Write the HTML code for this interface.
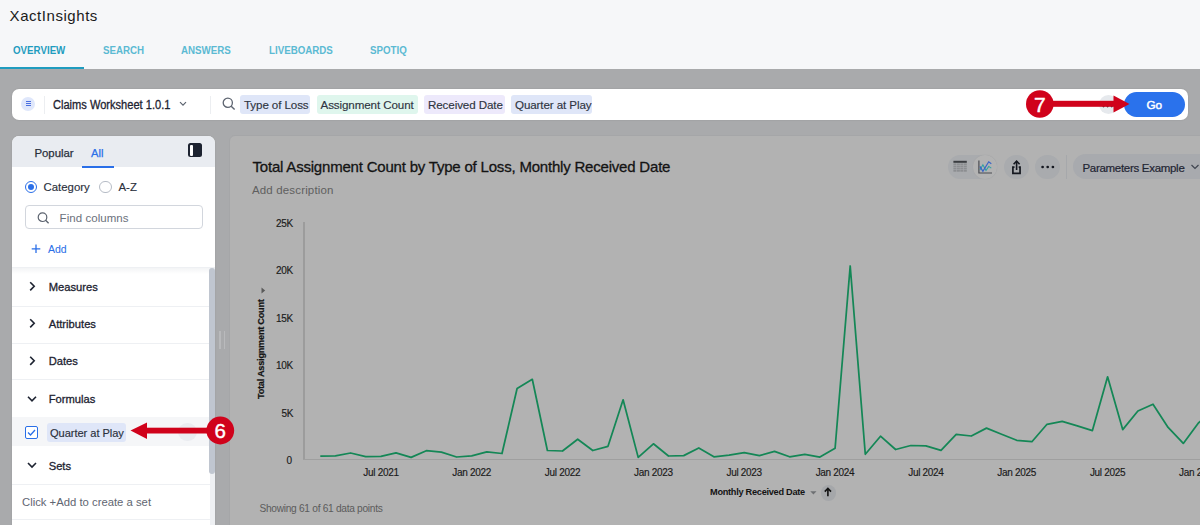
<!DOCTYPE html>
<html><head><meta charset="utf-8">
<style>
*{box-sizing:border-box;margin:0;padding:0}
html,body{width:1200px;height:525px;overflow:hidden}
body{position:relative;background:#a9aaac;font-family:"Liberation Sans",sans-serif;color:#1d2331}
.a{position:absolute;white-space:nowrap;line-height:1}
.abs{position:absolute}
#hdr{position:absolute;left:0;top:0;width:1200px;height:69px;background:#f6f7f9}
.tab{position:absolute;top:45px;font-size:11.4px;font-weight:bold;color:#5bbad3;line-height:1;transform:scaleX(0.855);transform-origin:0 0;white-space:nowrap}
#search{position:absolute;left:12px;top:88.5px;width:1176px;height:31.5px;background:#fff;border-radius:7px;box-shadow:0 0 2px rgba(0,0,0,0.12)}
.chip{position:absolute;white-space:nowrap;top:6.5px;height:18.5px;border-radius:3px;font-size:11.6px;color:#2f3542;line-height:20px;padding-left:4px;letter-spacing:-0.1px;-webkit-text-stroke:0.15px #2f3542}
#panel{position:absolute;left:12px;top:135.5px;width:203px;height:400px;background:#fff;border-radius:7px 7px 0 0;overflow:hidden;box-shadow:0 0 1.5px rgba(0,0,0,0.15)}
#card{position:absolute;left:229.2px;top:134.5px;width:1000px;height:400px;background:#b2b2b2;border-radius:6px;border:1px solid #a5a6a8}
.row{position:absolute;left:0;width:203px;border-top:1px solid #eef0f3}
.rt{position:absolute;left:36.7px;font-size:11.2px;color:#1d2331;line-height:1;-webkit-text-stroke:0.3px #1d2331;white-space:nowrap}
.ax{position:absolute;font-size:10px;color:#1a1a1a;line-height:1;white-space:nowrap;letter-spacing:-0.25px;-webkit-text-stroke:0.15px #1a1a1a}
.xl{position:absolute;top:468px;font-size:10px;color:#1a1a1a;line-height:1;white-space:nowrap;letter-spacing:-0.3px;transform:translateX(-50%);-webkit-text-stroke:0.15px #1a1a1a}
</style></head>
<body>
<div id="hdr">
  <div class="a" style="left:9.6px;top:8.2px;font-size:15px;letter-spacing:0.55px;color:#1b1b1b">XactInsights</div>
  <div class="tab" style="left:12.5px;color:#1f9cbf">OVERVIEW</div>
  <div class="tab" style="left:102.5px">SEARCH</div>
  <div class="tab" style="left:181px">ANSWERS</div>
  <div class="tab" style="left:269px">LIVEBOARDS</div>
  <div class="tab" style="left:370px">SPOTIQ</div>
  <div class="abs" style="left:0;top:67px;width:84px;height:2px;background:#1f9cbf"></div>
</div>

<div id="search">
  <div class="abs" style="left:9px;top:8px;width:14px;height:14px;border-radius:50%;background:#dfe7fb"></div>
  <div class="abs" style="left:13.6px;top:12.6px;width:5px;height:1px;background:#4b6fe0"></div>
  <div class="abs" style="left:13.6px;top:14.7px;width:5px;height:1px;background:#4b6fe0"></div>
  <div class="abs" style="left:13.6px;top:16.8px;width:5px;height:1px;background:#4b6fe0"></div>
  <div class="abs" style="left:32px;top:7px;width:1px;height:18px;background:#eceef1"></div>
  <div class="a" style="left:41px;top:10px;font-size:12px;color:#1d2331;-webkit-text-stroke:0.3px #1d2331;transform:scaleX(0.923);transform-origin:0 0">Claims Worksheet 1.0.1</div>
  <svg class="abs" style="left:167px;top:12.5px" width="8" height="6" viewBox="0 0 8 6"><path d="M1 1.2 L4 4.2 L7 1.2" fill="none" stroke="#5d6470" stroke-width="1.2"/></svg>
  <div class="abs" style="left:198px;top:7px;width:1px;height:18px;background:#eceef1"></div>
  <svg class="abs" style="left:210.3px;top:8.2px" width="14" height="14" viewBox="0 0 14 14"><circle cx="5.8" cy="5.8" r="4.6" fill="none" stroke="#5d6470" stroke-width="1.3"/><path d="M9.2 9.2 L12.6 12.6" stroke="#5d6470" stroke-width="1.4"/></svg>
  <div class="chip" style="left:228px;width:70px;background:#dfe6f8">Type of Loss</div>
  <div class="chip" style="left:304.5px;width:101px;background:#dff6ed">Assignment Count</div>
  <div class="chip" style="left:412px;width:80.5px;background:#ede9fb">Received Date</div>
  <div class="chip" style="left:499px;width:80.5px;background:#dfe6f8">Quarter at Play</div>
  <div class="abs" style="left:1086.5px;top:6.5px;width:19px;height:19px;border-radius:50%;background:#e6e9ed"></div><svg class="abs" style="left:1088px;top:14px" width="16" height="6"><circle cx="3.5" cy="3.3" r="1.1" fill="#2b2f38"/><circle cx="7.6" cy="3.3" r="1.1" fill="#2b2f38"/><circle cx="11.7" cy="3.3" r="1.1" fill="#2b2f38"/></svg>
  <div class="abs" style="left:1111.5px;top:3.5px;width:61.5px;height:25px;border-radius:13px;background:#2a72ec;color:#fff;font-size:11.8px;line-height:27px;text-align:center;-webkit-text-stroke:0.45px #fff">Go</div>
</div>

<!-- arrow 7 -->
<svg class="abs" style="left:0;top:0" width="1200" height="525">
  <rect x="1050" y="100.8" width="64" height="6" fill="#d0021b"/>
  <path d="M1113.5 95.5 L1129.5 104 L1113.5 112.5 Z" fill="#d0021b"/>
  <circle cx="1039.8" cy="104" r="13.8" fill="#d0021b"/>
  <text x="1039.9" y="111.7" font-family="Liberation Sans" font-size="21" fill="#fff" stroke="#fff" stroke-width="0.45" text-anchor="middle">7</text>
</svg>

<div id="panel">
  <div class="abs" style="left:0;top:0;width:203px;height:31px;background:#e9ecf1"></div>
  <div class="a" style="left:22.4px;top:12.5px;font-size:11.4px;color:#2a303c;-webkit-text-stroke:0.25px #2a303c">Popular</div>
  <div class="a" style="left:79px;top:12.5px;font-size:11.2px;color:#2a6fe8;-webkit-text-stroke:0.25px #2a6fe8">All</div>
  <div class="abs" style="left:69.7px;top:30px;width:32px;height:2px;background:#2a6fe8"></div>
  <div class="abs" style="left:176px;top:7.8px;width:14.4px;height:14px;border-radius:2.5px;background:#1d2331"></div>
  <div class="abs" style="left:177.8px;top:9.4px;width:3.6px;height:11px;border-radius:1px;background:#fff"></div>
  <!-- radios -->
  <div class="abs" style="left:12.7px;top:45.2px;width:12.6px;height:12.6px;border-radius:50%;border:1.3px solid #2a6fe8"></div>
  <div class="abs" style="left:15.7px;top:48.2px;width:6.6px;height:6.6px;border-radius:50%;background:#2a6fe8"></div>
  <div class="a" style="left:31.5px;top:46.3px;font-size:11.4px;color:#2a303c;-webkit-text-stroke:0.15px #2a303c">Category</div>
  <div class="abs" style="left:87.4px;top:45.2px;width:12.6px;height:12.6px;border-radius:50%;border:1px solid #b6bcc6"></div>
  <div class="a" style="left:106.5px;top:46.3px;font-size:11.4px;color:#2a303c;-webkit-text-stroke:0.15px #2a303c">A-Z</div>
  <!-- find -->
  <div class="abs" style="left:13.2px;top:69px;width:177.7px;height:24.3px;border-radius:4px;border:1px solid #d2d6dd"></div>
  <svg class="abs" style="left:25px;top:76px" width="13" height="12" viewBox="0 0 13 12"><circle cx="5.5" cy="5.2" r="4.3" fill="none" stroke="#5d6470" stroke-width="1.2"/><path d="M8.6 8.3 L11.6 11.3" stroke="#5d6470" stroke-width="1.3"/></svg>
  <div class="a" style="left:47.6px;top:77.5px;font-size:11.5px;letter-spacing:0.05px;color:#6b717c">Find columns</div>
  <svg class="abs" style="left:19px;top:108.5px" width="10" height="10" viewBox="0 0 10 10"><path d="M5 0.5 V9 M0.7 4.8 H9.3" stroke="#2a6fe8" stroke-width="1.3"/></svg>
  <div class="a" style="left:36px;top:108.5px;font-size:10.5px;color:#2a6fe8;-webkit-text-stroke:0.05px #2a6fe8">Add</div>
  <div class="abs" style="left:0;top:131.2px;width:203px;height:1px;background:#eef0f3"></div>
  <div class="abs" style="left:0;top:132.2px;width:203px;height:6px;background:linear-gradient(#f3f4f6,#fff)"></div>
  <!-- rows -->
  <div class="row" style="top:170.2px"></div>
  <div class="row" style="top:207.2px"></div>
  <div class="row" style="top:243.8px"></div>
  <div class="abs" style="left:0;top:281.9px;width:203px;height:29px;background:#f5f6f8"></div>
  <div class="row" style="top:348px"></div>
  <div class="row" style="top:383.8px"></div>
  <svg class="abs" style="left:0;top:0" width="203" height="400">
    <g fill="none" stroke="#1d2331" stroke-width="1.6">
      <path d="M18.2 146.2 L22.2 150.3 L18.2 154.4"/>
      <path d="M18.2 183.2 L22.2 187.3 L18.2 191.4"/>
      <path d="M18.2 220.7 L22.2 224.8 L18.2 228.9"/>
      <path d="M16 260.8 L20 264.8 L24 260.8"/>
      <path d="M16 327 L20 331 L24 327"/>
    </g>
  </svg>
  <div class="rt" style="top:146px">Measures</div>
  <div class="rt" style="top:183px">Attributes</div>
  <div class="rt" style="top:220.5px">Dates</div>
  <div class="rt" style="top:258px">Formulas</div>
  <div class="rt" style="top:325.5px">Sets</div>
  <div class="abs" style="left:13px;top:290.5px;width:12.6px;height:12.6px;border-radius:2px;border:1.2px solid #2a6fe8;background:#fff"></div>
  <svg class="abs" style="left:13px;top:290.5px" width="13" height="13" viewBox="0 0 13 13"><path d="M3 6.5 L5.5 9 L10 4" fill="none" stroke="#2a6fe8" stroke-width="1.3"/></svg>
  <div class="abs" style="left:35px;top:287.5px;width:78.6px;height:18.6px;border-radius:3px;background:#dfe6f8"></div>
  <div class="a" style="left:38px;top:292.5px;font-size:11.1px;color:#2a303c;letter-spacing:-0.05px;-webkit-text-stroke:0.15px #2a303c">Quarter at Play</div>
  <div class="abs" style="left:166.25px;top:287.45px;width:18.5px;height:18.5px;border-radius:50%;background:#eaecf0"></div>
  <div class="a" style="left:10px;top:361.5px;font-size:11.3px;color:#5f6672">Click +Add to create a set</div>
  <!-- scrollbar -->
  <div class="abs" style="left:197.5px;top:132px;width:5.5px;height:268px;background:#eef0f3"></div>
  <div class="abs" style="left:197.3px;top:132.1px;width:5.7px;height:206px;border-radius:3px;background:#c0c6d0"></div>
</div>

<!-- resize handle -->
<div class="abs" style="left:219.2px;top:330.5px;width:1.6px;height:18px;background:#b9babc"></div>
<div class="abs" style="left:223.8px;top:330.5px;width:1.6px;height:18px;background:#b9babc"></div>

<div id="card"></div>

<div class="a" style="left:252.5px;top:159px;font-size:15px;letter-spacing:-0.2px;color:#141414;-webkit-text-stroke:0.3px #141414">Total Assignment Count by Type of Loss, Monthly Received Date</div>
<div class="a" style="left:252px;top:184.7px;font-size:11.5px;color:#5f5f5f;letter-spacing:0.15px">Add description</div>

<!-- toolbar -->
<div class="abs" style="left:948px;top:154.5px;width:49px;height:24.5px;border-radius:12.3px;background:#a9abae"></div>
<div class="abs" style="left:973px;top:154.5px;width:24px;height:24.5px;border-radius:50%;background:#b3b3b3;box-shadow:0 0 1px #9b9da0"></div>
<svg class="abs" style="left:953px;top:160px" width="14" height="14" viewBox="0 0 14 14">
  <rect x="0.4" y="0.8" width="13.4" height="2" fill="#3a3c40"/>
  <g fill="#8c8e91"><rect x="0.4" y="3.4" width="3" height="1.7"/><rect x="3.9" y="3.4" width="3" height="1.7"/><rect x="7.3" y="3.4" width="3" height="1.7"/><rect x="10.8" y="3.4" width="3" height="1.7"/>
  <rect x="0.4" y="5.6" width="3" height="1.7"/><rect x="3.9" y="5.6" width="3" height="1.7"/><rect x="7.3" y="5.6" width="3" height="1.7"/><rect x="10.8" y="5.6" width="3" height="1.7"/>
  <rect x="0.4" y="7.8" width="3" height="1.7"/><rect x="3.9" y="7.8" width="3" height="1.7"/><rect x="7.3" y="7.8" width="3" height="1.7"/><rect x="10.8" y="7.8" width="3" height="1.7"/>
  <rect x="0.4" y="10" width="3" height="1.7"/><rect x="3.9" y="10" width="3" height="1.7"/><rect x="7.3" y="10" width="3" height="1.7"/><rect x="10.8" y="10" width="3" height="1.7"/></g>
</svg>
<svg class="abs" style="left:977.5px;top:160px" width="15" height="14" viewBox="0 0 15 14">
  <path d="M0.9 0.6 V13 H14" fill="none" stroke="#4a4c52" stroke-width="1.2"/>
  <path d="M1.9 10 L4.9 4.8 L8 10.5 L10.7 6.4 L13.3 8.1" fill="none" stroke="#2fa0a4" stroke-width="1.1"/>
  <path d="M1.9 6.4 L4.9 11.3 L10.7 1.8 L13.3 3.7" fill="none" stroke="#3a63c8" stroke-width="1.2"/>
</svg>
<div class="abs" style="left:1004.3px;top:154.5px;width:24.6px;height:24.5px;border-radius:50%;background:#a9abae"></div>
<svg class="abs" style="left:1011px;top:159.5px" width="11" height="15" viewBox="0 0 11 15">
  <path d="M5.6 1.2 V10" fill="none" stroke="#151820" stroke-width="1.6"/>
  <path d="M2.6 4.3 L5.6 1.2 L8.6 4.3" fill="none" stroke="#151820" stroke-width="1.6"/>
  <path d="M3.5 7.05 H1.9 V13.35 H9.05 V7.05 H7.7" fill="none" stroke="#151820" stroke-width="1.7"/>
</svg>
<div class="abs" style="left:1035.4px;top:154.5px;width:24.4px;height:24.5px;border-radius:50%;background:#a9abae"></div>
<svg class="abs" style="left:1040px;top:165px" width="16" height="4" viewBox="0 0 16 4"><circle cx="2.6" cy="2" r="1.35" fill="#151820"/><circle cx="7.7" cy="2" r="1.35" fill="#151820"/><circle cx="12.9" cy="2" r="1.35" fill="#151820"/></svg>
<div class="abs" style="left:1066px;top:154.8px;width:1px;height:24px;background:#a6a8ab"></div>
<div class="abs" style="left:1073.4px;top:154.3px;width:160px;height:25.1px;border-radius:12.5px;background:#a8aaae"></div>
<div class="a" style="left:1082.5px;top:162.7px;font-size:11.5px;color:#1f2533;letter-spacing:-0.3px;-webkit-text-stroke:0.2px #1f2533">Parameters Example</div>
<svg class="abs" style="left:1190px;top:163px" width="10" height="8" viewBox="0 0 10 8"><path d="M1.5 2 L5 5.5 L8.5 2" fill="none" stroke="#3f4550" stroke-width="1.2"/></svg>

<!-- axes -->
<div class="ax" style="left:276px;top:218.5px">25K</div>
<div class="ax" style="left:276px;top:266px">20K</div>
<div class="ax" style="left:276px;top:313.5px">15K</div>
<div class="ax" style="left:276px;top:361px">10K</div>
<div class="ax" style="left:281.4px;top:408.5px">5K</div>
<div class="ax" style="left:286.6px;top:456px">0</div>
<div class="abs" style="left:303px;top:222px;width:1.6px;height:238px;background:#9c9c9c"></div>
<div class="abs" style="left:303px;top:458.6px;width:900px;height:1.8px;background:#9f9f9f"></div>
<div class="a" style="left:256.8px;top:398.5px;font-size:9.2px;font-weight:bold;color:#141414;transform:rotate(-90deg);transform-origin:0 0;letter-spacing:-0.25px;-webkit-text-stroke:0.2px #141414">Total Assignment Count</div>
<svg class="abs" style="left:260.5px;top:287px" width="5" height="7" viewBox="0 0 5 7"><path d="M0.5 0.5 L4.2 3.5 L0.5 6.5 Z" fill="#5a5a5a"/></svg>

<div class="xl" style="left:381px">Jul 2021</div>
<div class="xl" style="left:471.7px">Jan 2022</div>
<div class="xl" style="left:562.5px">Jul 2022</div>
<div class="xl" style="left:653.4px">Jan 2023</div>
<div class="xl" style="left:744.2px">Jul 2023</div>
<div class="xl" style="left:835px">Jan 2024</div>
<div class="xl" style="left:925.9px">Jul 2024</div>
<div class="xl" style="left:1016.7px">Jan 2025</div>
<div class="xl" style="left:1107.6px">Jul 2025</div>
<div class="xl" style="left:1198.4px">Jan 2026</div>

<svg class="abs" style="left:0;top:0" width="1200" height="525">
  <polyline points="320.3,456.2 335.4,455.8 350.6,453 365.7,456.6 380.9,456.4 396.0,452.8 411.1,457.4 426.3,450.7 441.4,452.2 456.6,457 471.7,455.9 486.8,451.8 502.0,453.5 517.1,388.5 532.3,379.3 547.4,450.5 562.5,451 577.7,439.2 592.8,450.5 608.0,446.3 623.1,399.8 638.2,457.4 653.4,443.8 668.5,456 683.7,455.6 698.8,448 713.9,456.8 729.1,455.1 744.2,452.6 759.4,455.6 774.5,451.4 789.6,456.8 804.8,454.3 819.9,457.1 835.1,448.2 850.2,266 865.3,454.3 880.5,436.2 895.6,449.5 910.8,445.5 925.9,445.8 941.0,450.3 956.2,434.4 971.3,436 986.5,428.1 1001.6,434.2 1016.7,440.3 1031.9,441.7 1047.0,424.3 1062.2,421.4 1077.3,425.8 1092.4,430.6 1107.6,376.8 1122.7,429.6 1137.9,411 1153.0,404.2 1168.1,427.4 1183.3,443.4 1198.4,423 1213.6,410 1228.7,420" fill="none" stroke="#148756" stroke-width="1.75" stroke-linejoin="round"/>
</svg>

<div class="a" style="left:710px;top:487.5px;font-size:9.2px;font-weight:bold;color:#141414;letter-spacing:-0.27px">Monthly Received Date</div>
<svg class="abs" style="left:809.5px;top:490.5px" width="7" height="4" viewBox="0 0 7 4"><path d="M0.3 0.3 H6.5 L3.4 3.5 Z" fill="#6e7073"/></svg>
<div class="abs" style="left:820.7px;top:485.2px;width:15.6px;height:15.6px;border-radius:50%;background:#a5a7aa"></div>
<svg class="abs" style="left:822.9px;top:486.9px" width="10" height="10" viewBox="0 0 10 10"><path d="M4.9 9.3 V1.5 M1.8 4.6 L4.9 1.3 L8 4.6" fill="none" stroke="#111" stroke-width="1.6"/></svg>

<div class="a" style="left:259.5px;top:503.5px;font-size:10.2px;color:#5c5c5c;letter-spacing:-0.3px">Showing 61 of 61 data points</div>

<!-- arrow 6 -->
<svg class="abs" style="left:0;top:0" width="1200" height="525">
  <rect x="146" y="427.7" width="66" height="5.8" fill="#d0021b"/>
  <path d="M147 422.5 L130.5 430.6 L147 439 Z" fill="#d0021b"/>
  <circle cx="220.25" cy="430.5" r="13.9" fill="#d0021b"/>
  <text x="220.1" y="438.4" font-family="Liberation Sans" font-size="20.5" fill="#fff" stroke="#fff" stroke-width="0.4" text-anchor="middle">6</text>
</svg>
</body></html>
